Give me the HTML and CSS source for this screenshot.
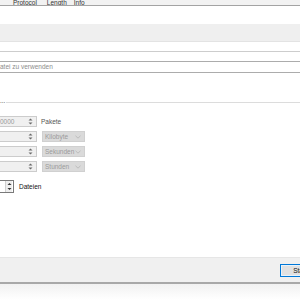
FILE: index.html
```html
<!DOCTYPE html>
<html>
<head>
<meta charset="utf-8">
<link rel="stylesheet" href="styles.css">
</head>
<body>
<div class="win">
  <div class="hdr">
    <span class="col c1">Protocol</span>
    <span class="col c2">Length</span>
    <span class="col c3">Info</span>
  </div>
  <div class="blank"></div>
  <div class="band"></div>
  <div class="gap1"></div>
  <div class="field fa"></div>
  <div class="field fb"><span class="ph">atei zu verwenden</span></div>

  <div class="group">
    <div class="legend"><span class="ltxt">...</span><span class="rule"></span></div>
    <div class="rows">
      <div class="row">
        <div class="spin dis"><span class="val">0000</span><span class="arr"><svg width="5" height="7" viewBox="0 0 5 7"><path d="M0.5 2.5 L2.5 0.5 L4.5 2.5 Z M0.5 4.5 L2.5 6.5 L4.5 4.5 Z" fill="#6a6a6a"/></svg></span></div>
        <span class="lbl">Pakete</span>
      </div>
      <div class="row">
        <div class="spin dis"><span class="val"></span><span class="arr"><svg width="5" height="7" viewBox="0 0 5 7"><path d="M0.5 2.5 L2.5 0.5 L4.5 2.5 Z M0.5 4.5 L2.5 6.5 L4.5 4.5 Z" fill="#6a6a6a"/></svg></span></div>
        <div class="combo"><span>Kilobyte</span><svg width="6" height="4" viewBox="0 0 6 4"><path d="M0.5 0.8 L3 3.2 L5.5 0.8" stroke="#b4b4b4" fill="none" stroke-width="0.8"/></svg></div>
      </div>
      <div class="row">
        <div class="spin dis"><span class="val"></span><span class="arr"><svg width="5" height="7" viewBox="0 0 5 7"><path d="M0.5 2.5 L2.5 0.5 L4.5 2.5 Z M0.5 4.5 L2.5 6.5 L4.5 4.5 Z" fill="#6a6a6a"/></svg></span></div>
        <div class="combo"><span>Sekunden</span><svg width="6" height="4" viewBox="0 0 6 4"><path d="M0.5 0.8 L3 3.2 L5.5 0.8" stroke="#b4b4b4" fill="none" stroke-width="0.8"/></svg></div>
      </div>
      <div class="row">
        <div class="spin dis"><span class="val"></span><span class="arr"><svg width="5" height="7" viewBox="0 0 5 7"><path d="M0.5 2.5 L2.5 0.5 L4.5 2.5 Z M0.5 4.5 L2.5 6.5 L4.5 4.5 Z" fill="#6a6a6a"/></svg></span></div>
        <div class="combo"><span>Stunden</span><svg width="6" height="4" viewBox="0 0 6 4"><path d="M0.5 0.8 L3 3.2 L5.5 0.8" stroke="#b4b4b4" fill="none" stroke-width="0.8"/></svg></div>
      </div>
      <div class="row last">
        <div class="spin small"><span class="sbtn"><svg width="5" height="9" viewBox="0 0 5 9"><path d="M0.5 3 L2.5 1 L4.5 3 Z M0.5 6 L2.5 8 L4.5 6 Z" fill="#333"/></svg></span></div>
        <span class="lbl dark">Dateien</span>
      </div>
    </div>
  </div>

  <div class="fill"></div>
  <div class="footer"><button class="btn">Start</button></div>
  <div class="under"></div>
</div>
</body>
</html>
```

FILE: styles.css
```css
html, body {
  margin: 0;
  padding: 0;
  background: #ffffff;
}
.win {
  width: 300px;
  height: 300px;
  overflow: hidden;
  font-family: "Liberation Sans", Arial, sans-serif;
  font-size: 6.5px;
  color: #222;
}
.hdr {
  height: 5px;
  background: #f2f2f2;
  border-bottom: 1px solid #a3a3a3;
  display: flex;
  align-items: flex-end;
  overflow: hidden;
}
.col {
  line-height: 6px;
  margin-bottom: -1px;
  color: #333;
}
.c1 { margin-left: 13px; }
.c2 { margin-left: 10px; }
.c3 { margin-left: 7px; }
.blank { height: 18px; }
.band {
  height: 17px;
  background: #efefef;
  border-bottom: 1px solid #e3e3e3;
}
.gap1 { height: 9px; }
.field.fa {
  height: 9px;
  border-top: 1px solid #cdcdcd;
}
.field.fb {
  height: 10px;
  border-top: 1px solid #acacac;
  border-bottom: 1px solid #acacac;
  display: flex;
  align-items: center;
}
.ph {
  color: #8c8c8c;
  margin-left: 0;
  line-height: 8px;
}
.group {
  margin-top: 24px;
}
.legend {
  display: flex;
  align-items: center;
  height: 8px;
}
.ltxt {
  color: #444;
  line-height: 6px;
  margin-top: -1px;
}
.rule {
  flex: 1;
  height: 1px;
  background: #dcdcdc;
  margin-left: 1px;
  margin-top: 3px;
}
.rows {
  margin-top: 11px;
  display: flex;
  flex-direction: column;
  gap: 4px;
}
.row {
  display: flex;
  align-items: center;
  height: 11px;
}
.row.last {
  height: 13px;
  margin-top: 4px;
}
.spin {
  box-sizing: border-box;
  height: 11px;
  width: 39px;
  margin-left: -2px;
  border: 1px solid #cccccc;
  display: flex;
  align-items: center;
  justify-content: space-between;
}
.spin.dis {
  background: #f0f0f0;
}
.val {
  color: #9a9a9a;
  margin-left: 1px;
  line-height: 8px;
}
.arr {
  display: flex;
  margin-right: 3px;
}
.lbl {
  margin-left: 4px;
  color: #555;
}
.lbl.dark {
  margin-left: 5px;
  color: #111;
}
.combo {
  box-sizing: border-box;
  margin-left: 5px;
  width: 43px;
  height: 11px;
  background: #dadada;
  border: 1px solid #d0d0d0;
  display: flex;
  align-items: center;
  justify-content: space-between;
  padding: 0 3px 0 2px;
  color: #9a9a9a;
}
.spin.small {
  width: 16px;
  height: 13px;
  margin-left: -2px;
  border: 1px solid #7a7a7a;
  background: #fff;
  justify-content: flex-end;
}
.sbtn {
  display: flex;
  align-items: center;
  justify-content: center;
  width: 6px;
  height: 11px;
  background: #eeeeee;
  border-left: 1px solid #cfcfcf;
  margin-right: 1px;
}
.fill { height: 64px; }
.footer {
  height: 24px;
  background: #f0f0f0;
  border-top: 1px solid #e6e6e6;
  border-bottom: 2px solid #a8a8a8;
  display: flex;
  align-items: center;
  justify-content: flex-end;
}
.btn {
  box-sizing: border-box;
  width: 40px;
  height: 13px;
  margin-right: -20px;
  padding: 0;
  background: #e1e1e1;
  border: 1px solid #0078d7;
  box-shadow: inset 0 0 0 1px #e8f2fb;
  font-family: "Liberation Sans", Arial, sans-serif;
  font-size: 6.5px;
  color: #111;
}
.under {
  height: 16px;
  background: linear-gradient(#f1f1f1, #ffffff);
}
```
